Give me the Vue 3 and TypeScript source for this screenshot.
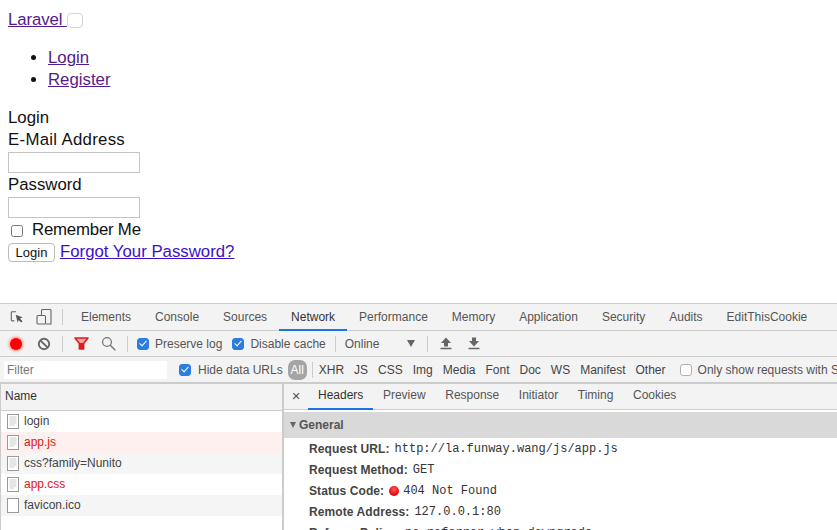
<script setup lang="ts">
const mainTabs: string[] = ['Elements', 'Console', 'Sources', 'Network', 'Performance', 'Memory', 'Application', 'Security', 'Audits', 'EditThisCookie']
const types: string[] = ['XHR', 'JS', 'CSS', 'Img', 'Media', 'Font', 'Doc', 'WS', 'Manifest', 'Other']
const detailTabs: string[] = ['Headers', 'Preview', 'Response', 'Initiator', 'Timing', 'Cookies']
interface Req { name: string; cls: string; blank?: boolean }
const requests: Req[] = [
  { name: 'login', cls: '' },
  { name: 'app.js', cls: 'err pink' },
  { name: 'css?family=Nunito', cls: 'alt' },
  { name: 'app.css', cls: 'err' },
  { name: 'favicon.ico', cls: 'alt', blank: true },
]
</script>

<template>
  <div class="page">
    <main class="site">
      <div class="line"><a href="#" class="brand">Laravel </a><button class="toggler" type="button"></button></div>
      <ul>
        <li><a href="#">Login</a></li>
        <li><a href="#">Register</a></li>
      </ul>
      <div class="line">Login</div>
      <div class="line wide">E-Mail Address</div>
      <input class="field" type="text" />
      <div class="line">Password</div>
      <input class="field" type="password" />
      <div class="line remember"><input type="checkbox" class="rem-check" /><span>Remember Me</span></div>
      <div class="actions"><button class="login-btn" type="button">Login</button><a href="#" class="forgot">Forgot Your Password?</a></div>
    </main>

    <section class="devtools">
      <div class="tabbar">
        <svg class="ic first" width="14" height="14" viewBox="0 0 16 16">
          <path d="M7 2H2.5a1 1 0 0 0-1 1v8.5a1 1 0 0 0 1 1H5" fill="none" stroke="#666" stroke-width="1.3"/>
          <path d="M6.5 5.5l8 3-3.2 1.3 3 3-1.5 1.5-3-3-1 3.2z" fill="#555"/>
        </svg>
        <svg class="ic second" width="16" height="16" viewBox="0 0 16 16">
          <path d="M5.5 6V1.5a1 1 0 0 1 1-1h7.5a1 1 0 0 1 1 1V15H10" fill="none" stroke="#666" stroke-width="1.1"/>
          <rect x="1" y="6.5" width="8.5" height="8.5" rx="1" fill="none" stroke="#666" stroke-width="1.1"/>
        </svg>
        <span class="sep tabsep"></span>
        <div class="tabs">
          <span v-for="t in mainTabs" :key="t" class="tab" :class="{ active: t === 'Network' }">{{ t }}</span>
        </div>
      </div>

      <div class="toolbar">
        <span class="record"></span>
        <svg class="clear" width="14" height="14" viewBox="0 0 14 14">
          <circle cx="7" cy="7" r="5.2" fill="none" stroke="#666" stroke-width="1.9"/>
          <path d="M3.3 3.3l7.4 7.4" stroke="#666" stroke-width="1.9"/>
        </svg>
        <span class="sep s1"></span>
        <svg class="funnel" width="15" height="13" viewBox="0 0 15 13">
          <path d="M1 1h13L9.6 6.4V12H5.4V6.4z" fill="#f6a5a5" stroke="#e01b1b" stroke-width="1.6" stroke-linejoin="round"/>
          <path d="M5.2 6h4.6L9 12H6z" fill="#e01b1b"/>
        </svg>
        <svg class="search" width="15" height="15" viewBox="0 0 15 15">
          <circle cx="6" cy="6" r="4.4" fill="none" stroke="#777" stroke-width="1.3"/>
          <path d="M9.3 9.3l5 5" stroke="#777" stroke-width="1.5"/>
        </svg>
        <span class="sep s2"></span>
        <label class="opt preserve"><span class="cb on"></span>Preserve log</label>
        <label class="opt disable"><span class="cb on"></span>Disable cache</label>
        <span class="sep s3"></span>
        <span class="online">Online</span>
        <span class="tri"></span>
        <span class="sep s4"></span>
        <svg class="arrow up" width="12" height="13" viewBox="0 0 12 13">
          <path d="M6 .5L11 6H8v3.5H4V6H1z" fill="#666"/><path d="M.5 11.5h11" stroke="#666" stroke-width="1.5"/>
        </svg>
        <svg class="arrow down" width="12" height="13" viewBox="0 0 12 13">
          <path d="M6 9.5L11 4H8V.5H4V4H1z" fill="#666"/><path d="M.5 11.5h11" stroke="#666" stroke-width="1.5"/>
        </svg>
      </div>

      <div class="filterbar">
        <span class="filter">Filter</span>
        <label class="opt hide"><span class="cb on"></span>Hide data URLs</label>
        <span class="all">All</span>
        <span class="sep s5"></span>
        <div class="types"><span v-for="t in types" :key="t">{{ t }}</span></div>
        <label class="opt only"><span class="cb"></span>Only show requests with SameSite issues</label>
      </div>

      <div class="split">
        <div class="list">
          <div class="list-head">Name</div>
          <div v-for="r in requests" :key="r.name" class="req" :class="r.cls">
            <svg width="12" height="15" viewBox="0 0 12 15" class="doc">
              <rect x=".5" y=".5" width="11" height="14" fill="#fff" stroke="#999"/>
              <path v-if="!r.blank" d="M2.5 3h7M2.5 5h7M2.5 7h7M2.5 9h7M2.5 11h5" stroke="#ccc" stroke-width="1"/>
            </svg>
            <span>{{ r.name }}</span>
          </div>
        </div>
        <div class="detail">
          <div class="detail-tabs">
            <span class="close">×</span>
            <span v-for="t in detailTabs" :key="t" class="dtab" :class="{ active: t === 'Headers' }">{{ t }}</span>
          </div>
          <div class="general"><span class="gtri"></span>General</div>
          <div class="hrow"><b>Request URL:</b><code>http://la.funway.wang/js/app.js</code></div>
          <div class="hrow"><b>Request Method:</b><code>GET</code></div>
          <div class="hrow"><b>Status Code:</b><span class="dot"></span><code>404 Not Found</code></div>
          <div class="hrow"><b>Remote Address:</b><code>127.0.0.1:80</code></div>
          <div class="hrow"><b>Referrer Policy:</b><code>no-referrer-when-downgrade</code></div>
        </div>
      </div>
    </section>
  </div>
</template>

<style>
html, body { margin: 0; background: #fff; }
</style>

<style scoped>
.page {
  width: 837px;
  height: 530px;
  overflow: hidden;
  display: flex;
  flex-direction: column;
  font-family: "Liberation Sans", Arial, sans-serif;
}
.site {
  height: 303px;
  flex: none;
  box-sizing: border-box;
  padding: 8px;
  font-size: 16.8px;
  line-height: 22px;
  color: #111;
}
.site a { color: #551a8b; text-decoration: underline; }
.brand { letter-spacing: -.1px; }
.line { height: 22px; box-sizing: border-box; padding-top: 2px; display: flex; align-items: center; white-space: pre; }
.wide { letter-spacing: .3px; }
.toggler {
  width: 16px;
  height: 15px;
  padding: 0;
  margin: 0;
  background: #fff;
  border: 1px solid #d4d4d4;
  border-radius: 4px;
}
ul { margin: 16px 0; padding: 0 0 0 40px; }
li { height: 22px; position: relative; top: 1px; }
.field {
  display: block;
  box-sizing: border-box;
  width: 132px;
  height: 21px;
  margin: 2px 0 0;
  padding: 0;
  border: 1px solid #c4c4c4;
  background: #fff;
}
.remember span { margin-left: 9px; letter-spacing: -.2px; }
.rem-check { width: 12px; height: 12px; margin: 1px 0 0 3px; }
.actions { display: flex; align-items: center; margin-top: 2px; height: 20px; }
.login-btn {
  box-sizing: border-box;
  width: 47px;
  height: 19px;
  padding: 0;
  background: #fff;
  border: 1px solid #bbb;
  border-radius: 4px;
  font: 13px "Liberation Sans", Arial, sans-serif;
  color: #111;
}
.forgot { margin-left: 5px; color: #3c10c8 !important; }

.devtools {
  flex: 1;
  min-height: 0;
  display: flex;
  flex-direction: column;
  background: #f3f3f3;
  border-top: 1px solid #ccc;
  font-size: 12px;
  color: #444;
  white-space: nowrap;
}
.sep { width: 1px; height: 16px; background: #ccc; flex: none; }
.tabbar {
  height: 26px;
  flex: none;
  display: flex;
  align-items: center;
  border-bottom: 1px solid #ccc;
}
.ic.first { margin-left: 10px; }
.ic.second { margin-left: 12px; }
.tabsep { margin-left: 10px; }
.tabs { display: flex; margin-left: 6px; height: 100%; }
.tab {
  padding: 0 12px;
  line-height: 26px;
  color: #555;
  box-sizing: border-box;
  height: 27px;
}
.tab.active { color: #333; border-bottom: 2px solid #1a73e8; }

.toolbar {
  height: 25px;
  flex: none;
  display: flex;
  align-items: center;
  border-bottom: 1px solid #ccc;
}
.record {
  width: 12px;
  height: 12px;
  margin-left: 10px;
  border-radius: 50%;
  background: #f00;
  box-shadow: 0 0 3px 1px rgba(255, 60, 60, .6);
  flex: none;
}
.clear { margin-left: 15px; flex: none; }
.s1 { margin-left: 11px; }
.funnel { margin-left: 11px; flex: none; }
.search { margin-left: 12px; flex: none; }
.s2 { margin-left: 11px; }
.opt { display: flex; align-items: center; color: #555; flex: none; }
.cb {
  width: 12px;
  height: 12px;
  box-sizing: border-box;
  margin-right: 6px;
  border-radius: 3px;
  background: #fff;
  border: 1px solid #b0b0b0;
  position: relative;
  flex: none;
}
.cb.on { background: #2a7de1; border-color: #2a7de1; }
.cb.on::after {
  content: "";
  position: absolute;
  left: 3px;
  top: 0.5px;
  width: 3px;
  height: 6px;
  border: solid #fff;
  border-width: 0 1.5px 1.5px 0;
  transform: rotate(42deg);
}
.preserve { margin-left: 9px; }
.disable { margin-left: 10px; }
.s3 { margin-left: 9px; }
.online { margin-left: 9px; color: #555; }
.tri {
  margin-left: 28px;
  width: 0;
  height: 0;
  border-left: 4px solid transparent;
  border-right: 4px solid transparent;
  border-top: 7px solid #666;
}
.s4 { margin-left: 12px; }
.arrow.up { margin-left: 12px; }
.arrow.down { margin-left: 16px; }

.filterbar {
  height: 25px;
  flex: none;
  display: flex;
  align-items: center;
  overflow: hidden;
}
.filter {
  box-sizing: border-box;
  width: 163px;
  height: 18px;
  margin-left: 4px;
  padding-left: 3px;
  background: #fff;
  color: #777;
  line-height: 18px;
  flex: none;
}
.hide { margin-left: 12px; }
.hide .cb { margin-right: 7px; }
.all {
  margin-left: 5px;
  width: 19px;
  height: 20px;
  border-radius: 7px;
  background: #a5a5a5;
  color: #fff;
  text-align: center;
  line-height: 20px;
  flex: none;
}
.s5 { margin-left: 5px; }
.types { display: flex; gap: 10px; margin-left: 6px; color: #444; flex: none; }
.only { margin-left: 14px; }

.split {
  flex: 1;
  min-height: 0;
  display: flex;
  border-top: 2px solid #ccc;
  background: #fff;
}
.list {
  width: 284px;
  box-sizing: border-box;
  flex: none;
  border-left: 1px solid #ccc;
  border-right: 2px solid #ccc;
}
.list-head {
  height: 27px;
  box-sizing: border-box;
  padding-left: 4px;
  line-height: 24px;
  background: #f3f3f3;
  border-bottom: 1px solid #ccc;
  color: #333;
}
.req {
  height: 21px;
  display: flex;
  align-items: center;
  padding-left: 6px;
  color: #444;
}
.req span { margin-bottom: 2px; }
.doc { margin-right: 5px; flex: none; }
.req.alt { background: #f5f5f5; }
.req.pink { background: #fff0f0; }
.req.err { color: #e01515; }
.detail { flex: 1; min-width: 0; overflow: hidden; }
.detail-tabs {
  height: 26px;
  box-sizing: border-box;
  display: flex;
  background: #f3f3f3;
  border-bottom: 1px solid #ccc;
}
.close { width: 24.2px; text-align: center; font-size: 15px; line-height: 23px; color: #555; }
.dtab { padding: 0 9.8px; line-height: 23px; color: #555; height: 26px; box-sizing: border-box; }
.dtab.active { color: #333; border-bottom: 2px solid #1a73e8; }
.general {
  margin-top: 2px;
  height: 26px;
  display: flex;
  align-items: center;
  background: #d9d9d9;
  font-weight: bold;
  color: #555;
}
.gtri {
  margin: 0 3px 0 6px;
  width: 0;
  height: 0;
  border-left: 3.5px solid transparent;
  border-right: 3.5px solid transparent;
  border-top: 6px solid #666;
}
.hrow { height: 21px; display: flex; align-items: center; padding-left: 25px; color: #444; }
.hrow b { margin-right: 5px; letter-spacing: .1px; }
.hrow code { font: 12px "Liberation Mono", monospace; color: #333; }
.dot {
  width: 10px;
  height: 10px;
  border-radius: 50%;
  background: radial-gradient(circle at 50% 35%, #ff5a5a, #e80000 70%);
  margin-right: 4px;
  flex: none;
}
</style>
